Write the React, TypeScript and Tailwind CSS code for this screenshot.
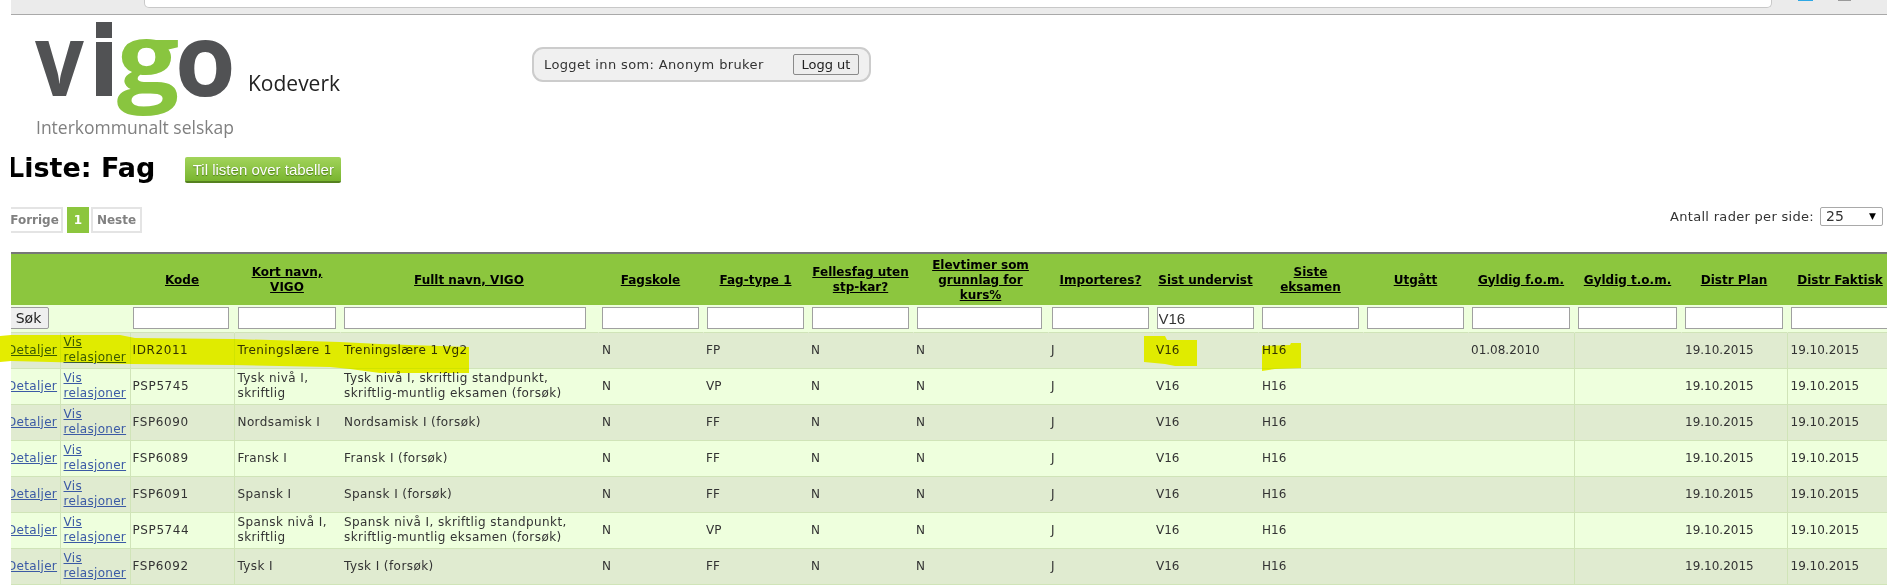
const headers: [string, number, number][] = [
  ["Kode", 104, 96],
  ["Kort navn, VIGO", 106, 98],
  ["Fullt navn, VIGO", 258, 242],
  ["Fagskole", 105, 97],
  ["Fag-type 1", 105, 97],
  ["Fellesfag uten stp-kar?", 105, 97],
  ["Elevtimer som grunnlag for kurs%", 135, 125],
  ["Importeres?", 105, 97],
  ["Sist undervist", 105, 97],
  ["Siste eksamen", 105, 97],
  ["Utgått", 105, 97],
  ["Gyldig f.o.m.", 106, 98],
  ["Gyldig t.o.m.", 107, 99],
  ["Distr Plan", 106, 98],
  ["Distr Faktisk", 106, 98],
];

const rows: string[][] = [
  ["IDR2011", "Treningslære 1", "Treningslære 1 Vg2", "FP", "01.08.2010"],
  ["PSP5745", "Tysk nivå I, skriftlig", "Tysk nivå I, skriftlig standpunkt, skriftlig-muntlig eksamen (forsøk)", "VP", ""],
  ["FSP6090", "Nordsamisk I", "Nordsamisk I (forsøk)", "FF", ""],
  ["FSP6089", "Fransk I", "Fransk I (forsøk)", "FF", ""],
  ["FSP6091", "Spansk I", "Spansk I (forsøk)", "FF", ""],
  ["PSP5744", "Spansk nivå I, skriftlig", "Spansk nivå I, skriftlig standpunkt, skriftlig-muntlig eksamen (forsøk)", "VP", ""],
  ["FSP6092", "Tysk I", "Tysk I (forsøk)", "FF", ""],
];

const td = "px-[3px] py-0 align-middle border-y border-[#d0e4b8] text-left font-normal";

export default function App() {
  return (
    <div className="relative h-[585px] w-[1887px] overflow-hidden bg-white font-['DejaVu_Sans',sans-serif] text-[12px] leading-[15px] text-[#333]">
      <div className="ml-[11px] overflow-hidden">
        {/* browser chrome remnant */}
        <div className="flex h-[15px] items-start border-b border-[#a9a9a9] bg-[#ebebeb] pl-[133px]">
          <div className="h-[8px] w-[1628px] rounded-b-[5px] border-x border-b border-[#c8c8c8] bg-white" />
          <div className="ml-[26px] h-[1px] w-[15px] bg-[#2ea8e5]" />
          <div className="ml-[25px] h-[1px] w-[13px] bg-[#9a9a9a]" />
        </div>

        <div className="-ml-[8px]">
          {/* header */}
          <div className="flex h-[123px]">
            <svg width="360" height="123" viewBox="0 15 360 123" className="shrink-0">
              <g fontFamily="'Open Sans', sans-serif" fontWeight="700" fontSize="100">
                <text transform="translate(32 96) scale(0.86 1)" fill="#515254">v</text>
                <rect x="93" y="22" width="16" height="16" fill="#515254" />
                <rect x="93" y="42" width="16" height="54" fill="#515254" />
                <text transform="translate(114 93) scale(1.1 0.97)" fill="#89c53f">g</text>
                <text transform="translate(172 96) scale(0.98 1)" fill="#515254">o</text>
              </g>
              <text x="245" y="91" fontFamily="'Open Sans', sans-serif" fontSize="21" fill="#222">Kodeverk</text>
              <text x="33" y="134" fontFamily="'Open Sans', sans-serif" fontSize="17.5" fill="#808080">Interkommunalt selskap</text>
            </svg>
            <div className="ml-[169px] mt-[32px] flex h-[35px] w-[339px] items-center rounded-[11px] border-2 border-[#cccccc] bg-[#f0f0f0] pl-[10px] text-[13px] tracking-[0.37px]">
              <span className="w-[249px] -mt-[1px] whitespace-nowrap">Logget inn som: Anonym bruker</span>
              <button className="h-[21px] w-[66px] rounded-[2px] border border-[#8a8a8a] bg-[#ededed] font-['DejaVu_Sans',sans-serif] text-[13px] tracking-normal text-[#222]">Logg ut</button>
            </div>
          </div>

          {/* title */}
          <div className="flex h-[69px] items-start pl-[4px] pt-[13px]">
            <h1 className="m-0 text-[27px] leading-[34px] font-bold text-black">Liste: Fag</h1>
            <button className="ml-[30px] mt-[6px] h-[26px] w-[156px] rounded-[2px] border-b-2 border-[#55811f] bg-gradient-to-b from-[#a2d45a] to-[#79b52f] font-['Liberation_Sans',sans-serif] text-[15px] text-white [text-shadow:0_1px_1px_#4d7a18]">Til listen over tabeller</button>
          </div>

          {/* pagination + page size */}
          <div className="flex h-[45px] items-start pl-[3px] pr-[3px] text-[12px] font-bold">
            <span className="flex h-[26px] w-[57px] items-center justify-center border-2 border-[#e4e4e4] text-[#808080]">Forrige</span>
            <span className="ml-[4px] flex h-[26px] w-[22px] items-center justify-center bg-[#8cc63e] text-white">1</span>
            <span className="ml-[2px] flex h-[26px] w-[51px] items-center justify-center border-2 border-[#e4e4e4] text-[#808080]">Neste</span>
            <div className="ml-auto flex items-center text-[13px] font-normal">
              <span className="tracking-[0.3px]">Antall rader per side:</span>
              <div className="ml-[6px] mr-[1px] flex h-[19px] w-[63px] items-center justify-between rounded-[2px] border border-[#a9a9a9] pl-[5px] pr-[6px] text-[14px]">
                <span>25</span>
                <span className="text-[9px] text-black">▼</span>
              </div>
            </div>
          </div>

          {/* table */}
          <table className="w-[1890px] table-fixed border-collapse border-t-2 border-[#777]">
            <colgroup>
              <col className="w-[57px]" />
              <col className="w-[70px]" />
              {headers.map(([h, w]) => (
                <col key={h} style={{ width: w }} />
              ))}
            </colgroup>
            <thead>
              <tr className="h-[52px] bg-[#8cc63e]">
                <th />
                <th />
                {headers.map(([h]) => (
                  <th key={h} className="px-[3px] pt-[1px] pb-0 text-center align-middle font-bold text-black">
                    <a className={`underline ${h === "Siste eksamen" ? "inline-block w-[70px]" : ""}`}>{h}</a>
                  </th>
                ))}
              </tr>
              <tr className="h-[27px] bg-[#eeffdd]">
                <td colSpan={2} className="px-0 align-middle">
                  <button className="ml-[5px] block h-[22px] w-[41px] rounded-[2px] border border-[#9a9a9a] bg-[#efefef] font-['DejaVu_Sans',sans-serif] text-[14px] text-[#222]">Søk</button>
                </td>
                {headers.map(([h, , iw], idx) => (
                  <td key={h} className={`${idx === 0 ? "" : "border-l border-transparent"} px-[3px] align-middle`}>
                    <input
                      readOnly
                      value={h === "Sist undervist" ? "V16" : ""}
                      style={{ width: iw }}
                      className="block h-[22px] border border-[#a0a0a0] bg-white pl-[1px] font-['Liberation_Sans',sans-serif] text-[15px] text-[#333]"
                    />
                  </td>
                ))}
              </tr>
            </thead>
            <tbody>
              {[...rows, null].map((r, i) => (
                <tr key={i} className={`h-[36px] ${i % 2 === 0 ? "bg-[#e0ebd0]" : "bg-[#eeffdd]"}`}>
                  {r ? (
                    <>
                      <td className={`${td} border-r pl-[4px] tracking-[0.3px]`}>
                        <a className="text-[#3b5aa5] underline">Detaljer</a>
                      </td>
                      <td className={`${td} border-r tracking-[0.3px]`}>
                        <a className="text-[#3b5aa5] underline">Vis relasjoner</a>
                      </td>
                      <td className={`${td} pl-[2px] tracking-[0.6px]`}>{r[0]}</td>
                      <td className={`${td} border-l tracking-[0.4px]`}>{r[1]}</td>
                      <td className={`${td} pl-[4px] tracking-[0.42px]`}>{r[2]}</td>
                      <td className={`${td} pl-[4px]`}>N</td>
                      <td className={td}>{r[3]}</td>
                      <td className={td}>N</td>
                      <td className={td}>N</td>
                      <td className={td}>J</td>
                      <td className={td}>V16</td>
                      <td className={`${td} pl-[4px]`}>H16</td>
                      <td className={td} />
                      <td className={`${td} border-r`}>{r[4]}</td>
                      <td className={td} />
                      <td className={`${td} border-r pl-[4px]`}>19.10.2015</td>
                      <td className={td}>19.10.2015</td>
                    </>
                  ) : (
                    <td colSpan={17} className={td} />
                  )}
                </tr>
              ))}
            </tbody>
          </table>
        </div>
      </div>

      {/* marker strokes drawn over the page */}
      <svg width="1887" height="585" className="absolute left-0 top-0 mix-blend-darken pointer-events-none">
        <g fill="#e4ec00">
          <polygon points="0,336 11,335 120,335 135,338 233,339 340,342 380,344 469,347 469,373 380,373 350,369 330,367 233,365 130,364 11,361 0,362" />
          <polygon points="1144,336 1165,336 1167,340 1197,340 1197,366 1175,366 1165,364 1144,362" />
          <polygon points="1262,346 1290,345 1291,343 1301,343 1301,368 1275,369 1262,371" />
        </g>
      </svg>
    </div>
  );
}
